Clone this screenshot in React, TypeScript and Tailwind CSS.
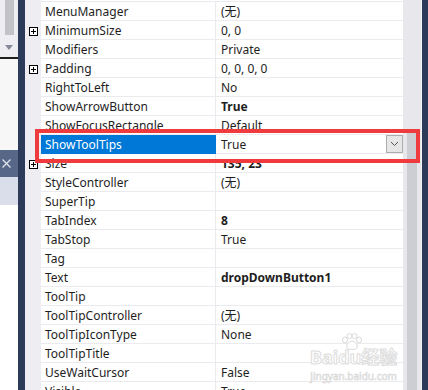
import React from "react";

type Row = { name: string; value: string; bold?: boolean; expand?: boolean; selected?: boolean };

const ROWS: Row[] = [
  { name: "MenuManager", value: "(无)" },
  { name: "MinimumSize", value: "0, 0", expand: true },
  { name: "Modifiers", value: "Private" },
  { name: "Padding", value: "0, 0, 0, 0", expand: true },
  { name: "RightToLeft", value: "No" },
  { name: "ShowArrowButton", value: "True", bold: true },
  { name: "ShowFocusRectangle", value: "Default" },
  { name: "ShowToolTips", value: "True", selected: true },
  { name: "Size", value: "135, 23", bold: true, expand: true },
  { name: "StyleController", value: "(无)" },
  { name: "SuperTip", value: "" },
  { name: "TabIndex", value: "8", bold: true },
  { name: "TabStop", value: "True" },
  { name: "Tag", value: "" },
  { name: "Text", value: "dropDownButton1", bold: true },
  { name: "ToolTip", value: "" },
  { name: "ToolTipController", value: "(无)" },
  { name: "ToolTipIconType", value: "None" },
  { name: "ToolTipTitle", value: "" },
  { name: "UseWaitCursor", value: "False" },
  { name: "Visible", value: "True" },
];

function PlusBox() {
  return (
    <div className="relative w-[9px] h-[9px] border border-black bg-white">
      <div className="absolute left-[1px] top-[3px] w-[5px] h-[1px] bg-black" />
      <div className="absolute left-[3px] top-[1px] w-[1px] h-[5px] bg-black" />
    </div>
  );
}

function PropRow({ row }: { row: Row }) {
  return (
    <div className="flex h-[19px] shrink-0">
      <div className="w-[16px] bg-[#eeeef2] flex items-center pl-[4px] pt-[1px]">
        {row.expand && <PlusBox />}
      </div>
      <div
        className={
          row.selected
            ? "w-[175px] bg-[#0078d7] text-white border-b border-[#0078d7] flex items-center pl-[4px] pt-[2px]"
            : "w-[174px] border-b border-[#ebebef] flex items-center pl-[4px] pt-[2px] text-[#1e1e1e]"
        }
      >
        {row.name}
      </div>
      {!row.selected && <div className="w-[1px] bg-[#ebebef]" />}
      <div className="flex-1 border-b border-[#ebebef] flex items-center pl-[5px] text-[#1e1e1e]">
        <span className={row.bold ? "font-bold pt-[2px]" : "pt-[2px]"}>{row.value}</span>
        {row.selected && (
          <div className="ml-auto w-[17px] h-[18px] border border-[#adadad] bg-[#e6e6e6] flex items-center justify-center">
            <svg width="9" height="6" viewBox="0 0 9 6">
              <path d="M1 1 L4.5 4.5 L8 1" stroke="#555" strokeWidth="1" fill="none" />
            </svg>
          </div>
        )}
      </div>
    </div>
  );
}

export default function App() {
  return (
    <div
      className="relative flex w-[428px] h-[390px] overflow-hidden bg-white text-[12px] leading-none"
      style={{ fontFamily: '"Noto Sans", "Noto Sans CJK SC", sans-serif' }}
    >
      {/* left docked panel */}
      <div className="w-[18px] flex flex-col">
        <div className="h-[57px] bg-[#eeeef2] flex flex-col items-center">
          <div className="w-[9px] h-[35px] bg-[#c2c3c9]" />
          <div className="mt-[10px] w-0 h-0 border-l-[4px] border-r-[4px] border-t-[5px] border-l-transparent border-r-transparent border-t-[#868999]" />
        </div>
        <div className="h-[2px] bg-[#1e1e1e]" />
        <div className="h-[91px] bg-[#f7f7f7]" />
        <div className="h-[27px] bg-[#566788] flex items-center pl-[2px]">
          <svg width="9" height="9" viewBox="0 0 9 9">
            <path d="M0.5 0.5 L8.5 8.5 M8.5 0.5 L0.5 8.5" stroke="#dfe3ec" strokeWidth="1.3" />
          </svg>
        </div>
        <div className="h-[28px] bg-[#d9deea]" />
        <div className="flex-1 bg-white" />
      </div>
      <div className="w-[7px] bg-[#2c3b5a]" />

      {/* property grid */}
      <div className="w-[378px] flex flex-col">
        <div className="flex h-[2px] shrink-0">
          <div className="w-[16px] bg-[#eeeef2]" />
          <div className="flex-1 border-b border-[#ebebef]" />
        </div>
        {ROWS.map((r) => (
          <PropRow key={r.name} row={r} />
        ))}
      </div>

      {/* vertical scrollbar */}
      <div className="w-[18px] bg-[#e8e8ec] flex flex-col pl-[4px]">
        <div className="mt-[133px] w-[10px] flex-1 bg-[#cdced3]" />
      </div>
      <div className="w-[1px] bg-[#f4f4f6]" />
      <div className="w-[6px] bg-[#2c3b5a]" />

      {/* red annotation box */}
      <div className="absolute left-[35px] top-[129px] w-[385px] h-[34px] border-[4px] border-[#ef3b3d]" />

      {/* watermark */}
      <svg className="absolute left-[340px] top-[333px] pointer-events-none" width="24" height="18" viewBox="0 0 24 18">
        <g fill="#ffffff" stroke="#dadada" strokeWidth="1">
          <ellipse cx="5" cy="7" rx="2.5" ry="3" />
          <ellipse cx="9.5" cy="3" rx="2.5" ry="2.5" />
          <ellipse cx="14.5" cy="3" rx="2.5" ry="2.5" />
          <ellipse cx="19" cy="7" rx="2.5" ry="3" />
          <path d="M12 8 C8 8 6 13 7 15 C8 17 16 17 17 15 C18 13 16 8 12 8 Z" />
        </g>
      </svg>
      <div className="absolute left-[310px] top-[348px] flex flex-col items-center text-white pointer-events-none">
        <div className="text-[18px] font-bold leading-none [-webkit-text-stroke:1px_#dcdcdc]">Baidu经验</div>
        <div className="text-[10px] leading-none mt-[5px] [-webkit-text-stroke:0.6px_#d6d6d6]">jingyan.baidu.com</div>
      </div>
    </div>
  );
}
